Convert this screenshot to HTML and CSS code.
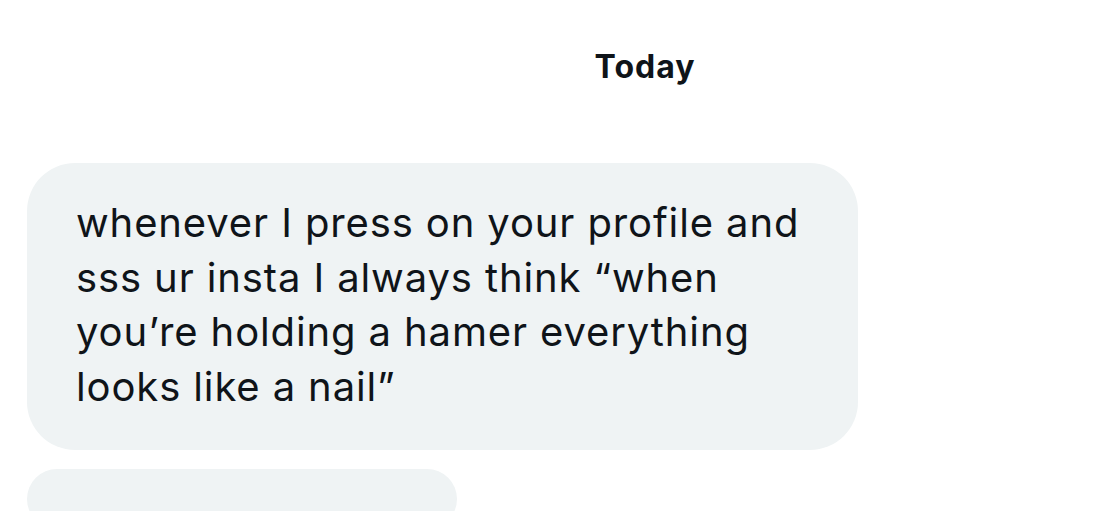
FILE: index.html
```html
<!DOCTYPE html>
<html>
<head>
<meta charset="utf-8">
<link rel="stylesheet" href="styles.css">
</head>
<body>
<div class="page">
  <div class="day">Today</div>
  <div class="thread">
    <div class="bubble main">whenever I press on your profile and<br>sss ur insta I always think “when<br>you’re holding a hamer everything<br>looks like a nail”</div>
    <div class="bubble next"></div>
  </div>
</div>
</body>
</html>
```
FILE: styles.css
```css
html, body {
  margin: 0;
  padding: 0;
  background: #ffffff;
  overflow: hidden;
}
.page {
  width: 1112px;
  height: 511px;
  overflow: hidden;
  font-family: "Inter", "Liberation Sans", sans-serif;
  color: #0f1419;
}
.day {
  padding: 47px 0 0 178px;
  height: 163px;
  box-sizing: border-box;
  text-align: center;
  font-size: 32px;
  font-weight: 700;
  line-height: 40px;
  letter-spacing: 1px;
}
.thread {
  display: flex;
  flex-direction: column;
  align-items: flex-start;
  gap: 19px;
  padding-left: 27px;
}
.bubble {
  background: #eff3f4;
  border-radius: 48px;
  box-sizing: border-box;
}
.main {
  width: 831px;
  height: 287px;
  padding: 33px 20px 0 49px;
  font-size: 40px;
  line-height: 54.7px;
  letter-spacing: 0.88px;
  white-space: nowrap;
}
.next {
  width: 430px;
  height: 60px;
}
```
